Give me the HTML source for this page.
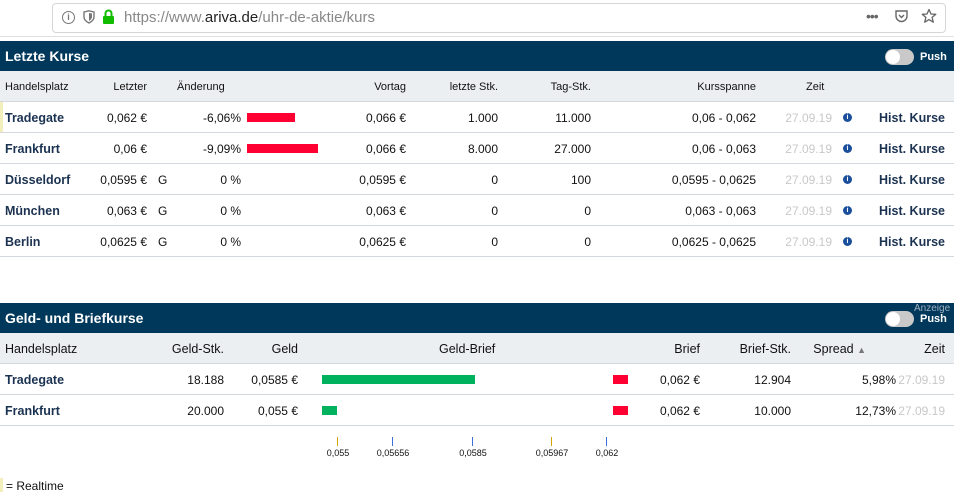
<!DOCTYPE html>
<html><head><meta charset="utf-8"><style>
*{margin:0;padding:0;box-sizing:border-box}
body{width:954px;height:495px;background:#fff;font-family:"Liberation Sans",sans-serif;font-size:12px;color:#111;position:relative;overflow:hidden}
.a{position:absolute;white-space:nowrap}
.r{position:absolute;text-align:right;white-space:nowrap}
.bar{position:absolute;left:0;width:954px}
.dark{background:#00385c;height:30px}
.gray{background:#eceff2;height:31px;border-bottom:1px solid #d3d8de}
.row{height:31px;border-bottom:1px solid #d3d8de}
.n{font-weight:bold;color:#1b3251;font-size:12.5px}
.d{color:#c8c8c8}
.ttl{color:#fff;font-weight:bold;font-size:14px}
.tog{position:absolute;width:29px;height:16px;border-radius:8px;background:#c9c9c9}
.tog:after{content:"";position:absolute;left:1px;top:1px;width:14px;height:14px;border-radius:7px;background:#fff}
.info{position:absolute;width:9px;height:9px;border-radius:5px;background:#1b4f9c;color:#fff;font-size:7px;font-weight:bold;text-align:center;line-height:9px}
.tick{position:absolute;width:1px;height:9px;top:437px}
.tl{position:absolute;top:448px;font-size:9px;transform:translateX(-50%)}
</style></head><body>
<div class="a" style="left:52px;top:3px;width:894px;height:30px;border:1px solid #d6d6d6;border-radius:4px;background:#fff"></div>
<div class="a" style="left:62px;top:11px;width:13px;height:13px;border:1.3px solid #777;border-radius:7px;font-size:9px;color:#777;text-align:center;line-height:11px;font-weight:bold">i</div>
<svg class="a" style="left:83px;top:10px" width="12" height="14" viewBox="0 0 12 14"><path d="M1 2 L6 0.8 L11 2 V7 C11 10 8 12 6 13 C4 12 1 10 1 7Z" fill="none" stroke="#777" stroke-width="1.4"/><path d="M6 3 V11 C7.5 10 9 8.5 9 7 V3.5Z" fill="#777"/></svg>
<svg class="a" style="left:102px;top:9px" width="13" height="15" viewBox="0 0 13 15"><path d="M3.5 7 V4.5 A3 3 0 0 1 9.5 4.5 V7" fill="none" stroke="#12bc00" stroke-width="2"/><rect x="1" y="7" width="11" height="8" rx="1" fill="#12bc00"/></svg>
<div class="a" style="left:124px;top:9px;font-size:15px;color:#888">https://www.<span style="color:#222">ariva.de</span>/uhr-de-aktie/kurs</div>
<div class="a" style="left:866px;top:8px;font-size:14px;color:#666;letter-spacing:-1px">•••</div>
<svg class="a" style="left:894px;top:9px" width="15" height="15" viewBox="0 0 15 15"><path d="M2 2 H13 V7 A5.5 5.5 0 0 1 2 7Z" fill="none" stroke="#666" stroke-width="1.4"/><path d="M5 6 L7.5 8.5 L10 6" fill="none" stroke="#666" stroke-width="1.4"/></svg>
<svg class="a" style="left:921px;top:8px" width="16" height="16" viewBox="0 0 16 16"><path d="M8 1.5 L10 6 L14.8 6.3 L11.1 9.4 L12.3 14.2 L8 11.6 L3.7 14.2 L4.9 9.4 L1.2 6.3 L6 6Z" fill="none" stroke="#666" stroke-width="1.3" stroke-linejoin="round"/></svg>
<div class="bar" style="top:36px;height:1px;background:#e0e0e0"></div>

<div class="bar dark" style="top:41px"></div>
<div class="a ttl" style="left:5px;top:48px">Letzte Kurse</div>
<div class="tog" style="left:885px;top:49px"></div>
<div class="a" style="left:920px;top:51px;color:#fff;font-weight:bold;font-size:11px">Push</div>
<div class="bar gray" style="top:71px"></div>
<div style="position:absolute;top:81px;left:0;width:954px;font-size:11px">
<span class="a" style="left:5px">Handelsplatz</span><span class="r" style="right:807px">Letzter</span><span class="a" style="left:177px">Änderung</span><span class="r" style="right:548px">Vortag</span><span class="r" style="right:456px">letzte Stk.</span><span class="r" style="right:363px">Tag-Stk.</span><span class="r" style="right:198px">Kursspanne</span><span class="a" style="left:806px">Zeit</span></div>

<div class="a" style="left:0;top:102px;width:3px;height:30px;background:#f3efbd"></div>
<div class="a" style="left:0;top:478px;width:3px;height:14px;background:#f3efbd"></div>

<div class="bar row" style="top:102px"></div>
<div class="bar row" style="top:133px"></div>
<div class="bar row" style="top:164px"></div>
<div class="bar row" style="top:195px"></div>
<div class="bar row" style="top:226px"></div>

<div style="position:absolute;top:111px;left:0;width:954px;height:20px">
<span class="a n" style="left:5px">Tradegate</span><span class="r" style="right:807px">0,062 €</span><span class="r" style="right:713px">-6,06%</span><span class="a" style="left:247px;top:2px;width:48px;height:9px;background:#ff0033"></span><span class="r" style="right:548px">0,066 €</span><span class="r" style="right:456px">1.000</span><span class="r" style="right:363px">11.000</span><span class="r" style="right:198px">0,06 - 0,062</span><span class="r d" style="right:122px">27.09.19</span><span class="info" style="left:843px;top:2px">i</span><span class="r n" style="right:9px">Hist. Kurse</span></div>
<div style="position:absolute;top:142px;left:0;width:954px;height:20px">
<span class="a n" style="left:5px">Frankfurt</span><span class="r" style="right:807px">0,06 €</span><span class="r" style="right:713px">-9,09%</span><span class="a" style="left:247px;top:2px;width:71px;height:9px;background:#ff0033"></span><span class="r" style="right:548px">0,066 €</span><span class="r" style="right:456px">8.000</span><span class="r" style="right:363px">27.000</span><span class="r" style="right:198px">0,06 - 0,063</span><span class="r d" style="right:122px">27.09.19</span><span class="info" style="left:843px;top:2px">i</span><span class="r n" style="right:9px">Hist. Kurse</span></div>
<div style="position:absolute;top:173px;left:0;width:954px;height:20px">
<span class="a n" style="left:5px">Düsseldorf</span><span class="r" style="right:807px">0,0595 €</span><span class="a" style="left:158px">G</span><span class="r" style="right:713px">0 %</span><span class="r" style="right:548px">0,0595 €</span><span class="r" style="right:456px">0</span><span class="r" style="right:363px">100</span><span class="r" style="right:198px">0,0595 - 0,0625</span><span class="r d" style="right:122px">27.09.19</span><span class="info" style="left:843px;top:2px">i</span><span class="r n" style="right:9px">Hist. Kurse</span></div>
<div style="position:absolute;top:204px;left:0;width:954px;height:20px">
<span class="a n" style="left:5px">München</span><span class="r" style="right:807px">0,063 €</span><span class="a" style="left:158px">G</span><span class="r" style="right:713px">0 %</span><span class="r" style="right:548px">0,063 €</span><span class="r" style="right:456px">0</span><span class="r" style="right:363px">0</span><span class="r" style="right:198px">0,063 - 0,063</span><span class="r d" style="right:122px">27.09.19</span><span class="info" style="left:843px;top:2px">i</span><span class="r n" style="right:9px">Hist. Kurse</span></div>
<div style="position:absolute;top:235px;left:0;width:954px;height:20px">
<span class="a n" style="left:5px">Berlin</span><span class="r" style="right:807px">0,0625 €</span><span class="a" style="left:158px">G</span><span class="r" style="right:713px">0 %</span><span class="r" style="right:548px">0,0625 €</span><span class="r" style="right:456px">0</span><span class="r" style="right:363px">0</span><span class="r" style="right:198px">0,0625 - 0,0625</span><span class="r d" style="right:122px">27.09.19</span><span class="info" style="left:843px;top:2px">i</span><span class="r n" style="right:9px">Hist. Kurse</span></div>

<div class="bar dark" style="top:303px"></div>
<div class="a ttl" style="left:5px;top:310px">Geld- und Briefkurse</div>
<div class="a" style="left:914px;top:303px;color:#9fb0c0;font-size:10px">Anzeige</div>
<div class="tog" style="left:885px;top:311px"></div>
<div class="a" style="left:920px;top:313px;color:#fff;font-weight:bold;font-size:11px">Push</div>
<div class="bar gray" style="top:333px"></div>
<div style="position:absolute;top:342px;left:0;width:954px;font-size:12.5px">
<span class="a" style="left:5px">Handelsplatz</span><span class="r" style="right:730px">Geld-Stk.</span><span class="r" style="right:656px">Geld</span><span class="a" style="left:439px">Geld-Brief</span><span class="r" style="right:254px">Brief</span><span class="r" style="right:163px">Brief-Stk.</span><span class="r" style="right:88px">Spread <span style="font-size:9px;color:#777">▲</span></span><span class="r" style="right:9px">Zeit</span></div>
<div class="bar row" style="top:364px"></div>
<div class="bar row" style="top:395px"></div>
<div style="position:absolute;top:373px;left:0;width:954px;height:20px">
<span class="a n" style="left:5px">Tradegate</span><span class="r" style="right:730px">18.188</span><span class="r" style="right:656px">0,0585 €</span><span class="a" style="left:322px;top:2px;width:153px;height:9px;background:#00b25d"></span><span class="a" style="left:613px;top:2px;width:15px;height:9px;background:#ff0033"></span><span class="r" style="right:254px">0,062 €</span><span class="r" style="right:163px">12.904</span><span class="r" style="right:58px">5,98%</span><span class="r d" style="right:9px">27.09.19</span></div>
<div style="position:absolute;top:404px;left:0;width:954px;height:20px">
<span class="a n" style="left:5px">Frankfurt</span><span class="r" style="right:730px">20.000</span><span class="r" style="right:656px">0,055 €</span><span class="a" style="left:322px;top:2px;width:15px;height:9px;background:#00b25d"></span><span class="a" style="left:613px;top:2px;width:15px;height:9px;background:#ff0033"></span><span class="r" style="right:254px">0,062 €</span><span class="r" style="right:163px">10.000</span><span class="r" style="right:58px">12,73%</span><span class="r d" style="right:9px">27.09.19</span></div>

<div class="tick" style="left:337px;background:#d4a400"></div>
<div class="tick" style="left:392px;background:#3a6fd8"></div>
<div class="tick" style="left:472px;background:#3a6fd8"></div>
<div class="tick" style="left:551px;background:#d4a400"></div>
<div class="tick" style="left:606px;background:#3a6fd8"></div>
<div class="tl" style="left:338px">0,055</div>
<div class="tl" style="left:393px">0,05656</div>
<div class="tl" style="left:473px">0,0585</div>
<div class="tl" style="left:552px">0,05967</div>
<div class="tl" style="left:607px">0,062</div>

<div class="a" style="left:6px;top:479px;font-size:12px">= Realtime</div>
</body></html>
